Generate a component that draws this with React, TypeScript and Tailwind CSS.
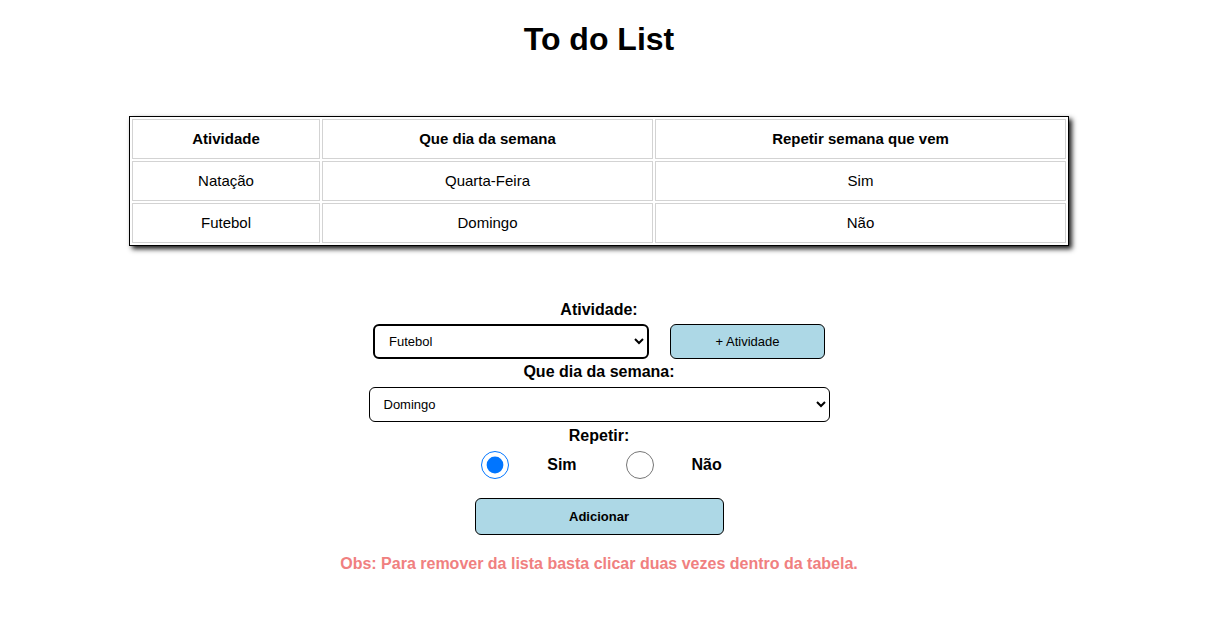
import { useState } from "react"

type Item = { atividade: string, dia: string, repetir: string }

const App = () => {
  const [lista, setLista] = useState<Item[]>([
    { atividade: 'Natação', dia: 'Quarta-Feira', repetir: 'Sim' },
    { atividade: 'Futebol', dia: 'Domingo', repetir: 'Não' },
  ])
  const [atividade, setAtividade] = useState('Futebol')
  const [dia, setDia] = useState('Domingo')
  const [repetir, setRepetir] = useState('Sim')

  const adicionar = () => {
    setLista([...lista, { atividade, dia, repetir }])
  }

  const remover = (i: number) => {
    setLista(lista.filter((_, idx) => idx !== i))
  }

  return (
    <div className="w-[1198px] font-['Liberation_Sans',Arial,sans-serif] text-black bg-white">
      <h1 className="text-center text-[32px] leading-[37px] font-bold pt-[21px]">To do List</h1>

      <table className="mx-auto mt-[58px] w-[940px] border border-black border-separate border-spacing-[2px] shadow-[3px_3px_5px_rgba(0,0,0,0.9)] text-[15px]">
        <thead>
          <tr className="h-[40px]">
            <th className="w-[188px] border border-[#d3d3d3] font-bold">Atividade</th>
            <th className="w-[331px] border border-[#d3d3d3] font-bold">Que dia da semana</th>
            <th className="border border-[#d3d3d3] font-bold">Repetir semana que vem</th>
          </tr>
        </thead>
        <tbody>
          {lista.map((item, i) => (
            <tr key={i} className="h-[40px]" onDoubleClick={() => remover(i)}>
              <td className="border border-[#d3d3d3] text-center">{item.atividade}</td>
              <td className="border border-[#d3d3d3] text-center">{item.dia}</td>
              <td className="border border-[#d3d3d3] text-center">{item.repetir}</td>
            </tr>
          ))}
        </tbody>
      </table>

      <div className="flex flex-col items-center mt-[55px]">
        <label className="font-bold text-[16px] leading-[18px]">Atividade:</label>
        <div className="flex gap-[21px] mt-[5px]">
          <select
            value={atividade}
            onChange={(e) => setAtividade(e.target.value)}
            className="w-[276px] h-[35px] border-2 border-black rounded-[6px] pl-[10px] text-[13px] bg-white"
          >
            <option>Futebol</option>
            <option>Natação</option>
            <option>Corrida</option>
          </select>
          <button className="w-[155px] h-[35px] border border-black rounded-[6px] bg-[#add8e6] text-[13px]">+ Atividade</button>
        </div>

        <label className="font-bold text-[16px] leading-[18px] mt-[4px]">Que dia da semana:</label>
        <select
          value={dia}
          onChange={(e) => setDia(e.target.value)}
          className="w-[461px] h-[35px] border border-black rounded-[6px] pl-[10px] mt-[6px] text-[13px] bg-white"
        >
          <option>Domingo</option>
          <option>Segunda-Feira</option>
          <option>Terça-Feira</option>
          <option>Quarta-Feira</option>
          <option>Quinta-Feira</option>
          <option>Sexta-Feira</option>
          <option>Sábado</option>
        </select>

        <label className="font-bold text-[16px] leading-[18px] mt-[5px]">Repetir:</label>
        <div className="flex items-center mt-[6px] h-[28px] ml-[5px]">
          <input
            type="radio"
            name="repetir"
            checked={repetir === 'Sim'}
            onChange={() => setRepetir('Sim')}
            className="w-[28px] h-[28px] m-0 accent-[#0075ff]"
          />
          <span className="font-bold text-[16px] ml-[38px]">Sim</span>
          <input
            type="radio"
            name="repetir"
            checked={repetir === 'Não'}
            onChange={() => setRepetir('Não')}
            className="w-[28px] h-[28px] m-0 ml-[49px] accent-[#0075ff]"
          />
          <span className="font-bold text-[16px] ml-[38px]">Não</span>
        </div>

        <button
          onClick={adicionar}
          className="w-[249px] h-[37px] mt-[19px] border border-black rounded-[6px] bg-[#add8e6] text-[13px] font-bold"
        >
          Adicionar
        </button>

        <p className="mt-[20px] text-[16px] leading-[18px] font-bold text-[#f08080]">
          Obs: Para remover da lista basta clicar duas vezes dentro da tabela.
        </p>
      </div>
    </div>
  )
}

export default App
